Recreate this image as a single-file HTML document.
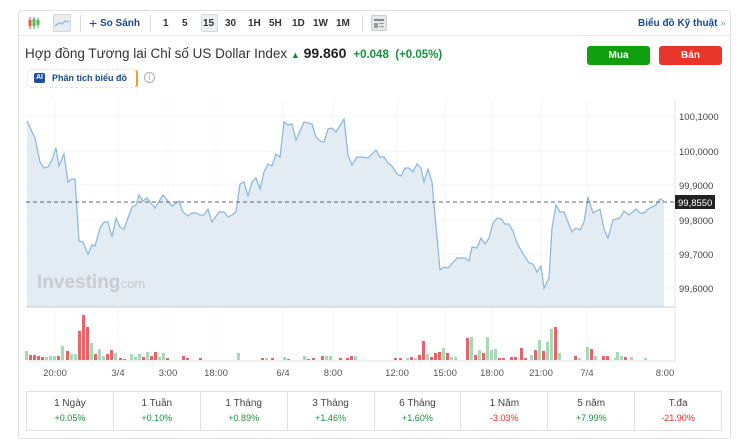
<!DOCTYPE html>
<html><head><meta charset="utf-8">
<style>
*{box-sizing:border-box;margin:0;padding:0}
body{width:740px;height:442px;background:#fff;font-family:"Liberation Sans",sans-serif;position:relative;overflow:hidden;color:#333}
.card{position:absolute;left:18px;top:10px;width:713px;height:429px;border:1px solid #dfe2e6;border-radius:4px}
.tb{position:absolute;left:0;top:0;width:711px;height:25px;border-bottom:1px solid #e3e6ea}
.t{position:absolute;top:7px;font-size:10px;font-weight:bold;color:#1a4a8a;white-space:nowrap}
.sep{position:absolute;top:4px;width:1px;height:17px;background:#d6d9dd}
.abs{position:absolute}
</style></head><body>
<div class="card">
 <div class="tb">
  <svg class="abs" style="left:8px;top:5px" width="14" height="14"><line x1="3" y1="1" x2="3" y2="13" stroke="#d44" /><rect x="1.5" y="4" width="3" height="6" fill="#e55"/><line x1="7" y1="1" x2="7" y2="13" stroke="#4a4"/><rect x="5.5" y="3" width="3" height="7" fill="#5b5"/><line x1="11" y1="2" x2="11" y2="12" stroke="#4a4"/><rect x="9.5" y="4" width="3" height="5" fill="#5b5"/></svg>
  <div class="abs" style="left:34px;top:3px;width:18px;height:18px;background:#e8ecf1;border:1px solid #d3d8de;border-radius:2px"></div>
  <svg class="abs" style="left:36px;top:6px" width="14" height="12"><polyline points="0,9 4,6 7,7 10,4 14,5" fill="none" stroke="#8db0d8" stroke-width="1.2"/></svg>
  <div class="sep" style="left:61px"></div>
  <div class="t" style="left:70px;top:4px;font-size:14px;font-weight:normal">+</div>
  <div class="t" style="left:81px">So Sánh</div>
  <div class="sep" style="left:131px"></div>
  <div class="t" style="left:144px;color:#333">1</div>
  <div class="t" style="left:163px;color:#333">5</div>
  <div class="abs" style="left:182px;top:3px;width:17px;height:18px;background:#eef0f3;border:1px solid #d6d9de;border-radius:2px"></div>
  <div class="t" style="left:184px;color:#333">15</div>
  <div class="t" style="left:206px;color:#333">30</div>
  <div class="t" style="left:229px;color:#333">1H</div>
  <div class="t" style="left:250px;color:#333">5H</div>
  <div class="t" style="left:273px;color:#333">1D</div>
  <div class="t" style="left:294px;color:#333">1W</div>
  <div class="t" style="left:317px;color:#333">1M</div>
  <div class="sep" style="left:343px"></div>
  <div class="abs" style="left:352px;top:4px;width:16px;height:16px;background:#e5e7ea;border:1px solid #c9ccd0;border-radius:2px"></div>
  <div class="abs" style="left:355px;top:8px;width:10px;height:2px;background:#888"></div>
  <div class="abs" style="left:355px;top:12px;width:4px;height:5px;background:#999"></div>
  <div class="abs" style="left:360px;top:12px;width:5px;height:1px;background:#999"></div>
  <div class="abs" style="left:360px;top:15px;width:5px;height:1px;background:#999"></div>
  <div class="t" style="left:619px">Biểu đồ Kỹ thuật <span style="color:#7a9ac5;font-weight:normal">»</span></div>
 </div>
 <div class="abs" style="left:6px;top:34px;font-size:13.5px;color:#333;white-space:nowrap">Hợp đồng Tương lai Chỉ số US Dollar Index <span style="color:#18813c;font-size:9px">&#9650;</span> <b style="font-size:14px;color:#222">99.860</b> <b style="color:#19913c;font-size:11.5px">&nbsp;+0.048&nbsp; (+0.05%)</b></div>
 <div class="abs" style="left:568px;top:35px;width:63px;height:19px;background:#10a00f;border-radius:3px;color:#fff;font-size:10px;font-weight:bold;text-align:center;line-height:19px">Mua</div>
 <div class="abs" style="left:640px;top:35px;width:63px;height:19px;background:#e8352a;border-radius:3px;color:#fff;font-size:10px;font-weight:bold;text-align:center;line-height:19px">Bán</div>
 <div class="abs" style="left:8px;top:58px;width:111px;height:19px;border:1px dashed #e4e6ee;border-right:2px solid #f29a3a;border-radius:4px"></div>
 <div class="abs" style="left:15px;top:62px;width:11px;height:10px;background:#1a4fa0;border-radius:2px;color:#fff;font-size:7px;font-weight:bold;text-align:center;line-height:10px">AI</div>
 <div class="abs" style="left:33px;top:62px;font-size:9px;font-weight:bold;color:#1a4a8a;white-space:nowrap">Phân tích biểu đồ</div>
 <div class="abs" style="left:125px;top:61px;width:11px;height:11px;border:1px solid #aaa;border-radius:50%;font-size:8px;color:#999;text-align:center;line-height:10px">i</div>
</div>
<svg class="abs" style="left:0;top:0" width="740" height="442" id="ch">
 <g stroke="#f5f6f8" stroke-width="1">
  <line x1="26" y1="116" x2="675" y2="116"/><line x1="26" y1="151" x2="675" y2="151"/><line x1="26" y1="185" x2="675" y2="185"/><line x1="26" y1="220" x2="675" y2="220"/><line x1="26" y1="254" x2="675" y2="254"/><line x1="26" y1="288" x2="675" y2="288"/>
  <line x1="55" y1="100" x2="55" y2="362"/><line x1="118" y1="100" x2="118" y2="362"/><line x1="168" y1="100" x2="168" y2="362"/><line x1="216" y1="100" x2="216" y2="362"/><line x1="283" y1="100" x2="283" y2="362"/><line x1="333" y1="100" x2="333" y2="362"/><line x1="397" y1="100" x2="397" y2="362"/><line x1="445" y1="100" x2="445" y2="362"/><line x1="492" y1="100" x2="492" y2="362"/><line x1="541" y1="100" x2="541" y2="362"/><line x1="587" y1="100" x2="587" y2="362"/>
 </g>
 <polygon id="area" fill="#e3ebf3" stroke="none"/>
 <polyline id="line" fill="none" stroke="#8ab6dc" stroke-width="1.2"/>
 <line x1="26" y1="307" x2="675" y2="307" stroke="#c8ccd2"/>
 <line x1="675" y1="100" x2="675" y2="362" stroke="#e3e6ea"/>
 <line x1="26" y1="202" x2="675" y2="202" stroke="#666" stroke-dasharray="4,3"/>
 <text x="37" y="288" font-family="Liberation Sans" font-size="19" font-weight="bold" fill="#c9ccd0">Investing</text><text x="117" y="288" font-family="Liberation Sans" font-size="13" fill="#c9ccd0">.com</text>
 <g font-family="Liberation Sans" font-size="9.5" fill="#444">
  <text x="679" y="120">100,1000</text><text x="679" y="155">100,0000</text><text x="679" y="189">99,9000</text><text x="679" y="224">99,8000</text><text x="679" y="258">99,7000</text><text x="679" y="292">99,6000</text>
 </g>
 <rect x="675" y="195" width="40" height="14" fill="#222"/>
 <text x="678" y="206" font-family="Liberation Sans" font-size="9.5" fill="#fff">99,8550</text>
 <g id="vol"></g>
 <line x1="26" y1="361" x2="675" y2="361" stroke="#e3e6ea"/>
 <g font-family="Liberation Sans" font-size="9.5" fill="#555" text-anchor="middle">
  <text x="55" y="376">20:00</text><text x="118" y="376">3/4</text><text x="168" y="376">3:00</text><text x="216" y="376">18:00</text><text x="283" y="376">6/4</text><text x="333" y="376">8:00</text><text x="397" y="376">12:00</text><text x="445" y="376">15:00</text><text x="492" y="376">18:00</text><text x="541" y="376">21:00</text><text x="587" y="376">7/4</text><text x="665" y="376">8:00</text>
 </g>
</svg>
<div class="abs" style="left:26px;top:391px;width:696px;height:40px;border:1px solid #dfe2e6;display:flex">
 <div style="flex:1;text-align:center;border-right:1px solid #dfe2e6;font-size:10px;padding-top:6px;color:#444">1 Ngày<div style="color:#19913c;font-size:9px;margin-top:4px">+0.05%</div></div>
 <div style="flex:1;text-align:center;border-right:1px solid #dfe2e6;font-size:10px;padding-top:6px;color:#444">1 Tuần<div style="color:#19913c;font-size:9px;margin-top:4px">+0.10%</div></div>
 <div style="flex:1;text-align:center;border-right:1px solid #dfe2e6;font-size:10px;padding-top:6px;color:#444">1 Tháng<div style="color:#19913c;font-size:9px;margin-top:4px">+0.89%</div></div>
 <div style="flex:1;text-align:center;border-right:1px solid #dfe2e6;font-size:10px;padding-top:6px;color:#444">3 Tháng<div style="color:#19913c;font-size:9px;margin-top:4px">+1.46%</div></div>
 <div style="flex:1;text-align:center;border-right:1px solid #dfe2e6;font-size:10px;padding-top:6px;color:#444">6 Tháng<div style="color:#19913c;font-size:9px;margin-top:4px">+1.60%</div></div>
 <div style="flex:1;text-align:center;border-right:1px solid #dfe2e6;font-size:10px;padding-top:6px;color:#444">1 Năm<div style="color:#e0312b;font-size:9px;margin-top:4px">-3.03%</div></div>
 <div style="flex:1;text-align:center;border-right:1px solid #dfe2e6;font-size:10px;padding-top:6px;color:#444">5 năm<div style="color:#19913c;font-size:9px;margin-top:4px">+7.99%</div></div>
 <div style="flex:1;text-align:center;font-size:10px;padding-top:6px;color:#444">T.đa<div style="color:#e0312b;font-size:9px;margin-top:4px">-21.90%</div></div>
</div>
<script>
var p="27,121 35,138 40,162 44,168 48,167 52,160 56,148 59,166 64,154 68,182 72,179 75,179 79,241 83,242 88,254 92,245 95,246 100,228 104,222 108,222 112,237 116,218 120,227 124,229 132,207 136,205 139,195 143,201 147,198 155,208 163,195 172,206 179,201 183,212 188,216 192,213 196,213 200,215 204,215 208,209 212,222 219,212 224,212 228,217 232,215 236,212 240,184 244,182 248,196 252,182 256,178 260,189 264,172 268,164 272,166 276,154 280,157 284,122 288,125 292,124 296,140 304,122 312,124 316,137 320,141 324,142 328,129 332,128 336,132 344,119 348,155 352,165 357,157 361,157 368,158 376,150 380,157 384,157 388,163 392,166 397,174 401,176 405,168 409,168 413,172 417,164 421,168 424,182 428,169 432,182 440,270 444,267 448,268 457,258 465,258 469,261 472,247 477,248 481,238 485,244 489,238 493,223 497,218 501,219 505,224 509,224 513,231 517,243 522,252 529,263 533,264 537,272 541,266 544,288 549,278 552,228 556,205 560,212 564,212 572,232 576,228 580,230 584,222 588,197 593,213 600,209 604,229 608,238 613,220 620,218 624,211 629,215 636,209 640,213 644,213 648,209 656,205 660,199 664,201";
document.getElementById('line').setAttribute('points',p);
document.getElementById('area').setAttribute('points',p+" 664,307 27,307");
var v="26g9 30r5 34r5 38r4 42r3 46g3 50g4 54g4 58r4 62g14 67r9 71g6 75g6 79r29 83r45 87r33 91g17 95r6 99g11 103g4 107r6 111r10 115g7 120r2 124r1 131g6 135g3 139g6 143r3 147g8 151r4 155r8 159g3 163g7 167r2 183r4 187r2 200r2 238g7 262r2 266g2 272r2 284g3 288r1 304g4 308r1 313r2 322r4 326g4 330g4 340r2 347r2 351r4 355g4 395r2 400r2 407g2 411r3 415g2 419r5 423r19 427g6 431r3 435r7 439r8 443g12 447r7 451g3 455g3 467r22 471g23 475r5 479g10 483r7 487g23 491g10 495g11 499r2 503r2 511r3 515r3 521r12 525r2 531g5 535r10 539g20 543r9 547g18 551g31 555r33 559g7 575r4 579g2 587g13 591r11 595g4 603r4 607r4 615g2 617g8 621g4 625r3 631g3 645g2".split(" ");
var s="";v.forEach(function(b){var m=b.match(/(\d+)([rg])(\d+)/);var x=+m[1],h=+m[3];s+='<rect x="'+(x-1)+'" y="'+(360-h)+'" width="3" height="'+h+'" fill="'+(m[2]=="r"?"#e5636a":"#a6dab5")+'"/>';});
document.getElementById('vol').innerHTML=s;
</script>
</body></html>
